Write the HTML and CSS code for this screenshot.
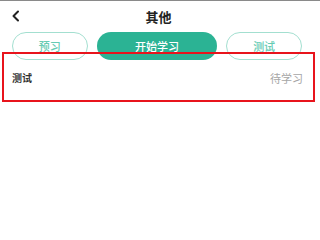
FILE: index.html
```html
<!DOCTYPE html>
<html>
<head>
<meta charset="utf-8">
<link rel="stylesheet" href="styles.css">
</head>
<body>
<div class="page">
  <div class="header">
    <svg class="back" width="8" height="12" viewBox="0 0 8 12"><path d="M6 1.5 L1.5 6 L6 10.5" fill="none" stroke="#222" stroke-width="2" stroke-linecap="round" stroke-linejoin="round"/></svg>
    <div class="title">其他</div>
  </div>
  <div class="tabs">
    <div class="pill outline">预习</div>
    <div class="pill filled">开始学习</div>
    <div class="pill outline">测试</div>
  </div>
  <div class="row">
    <span class="name">测试</span>
    <span class="status">待学习</span>
  </div>
  <div class="mark"></div>
</div>
</body>
</html>
```
FILE: styles.css
```css
html, body {
  margin: 0;
  padding: 0;
  background: #fff;
}
.page {
  position: relative;
  width: 320px;
  height: 219px;
  border-top: 1.5px solid #8a8a8a;
  box-sizing: border-box;
  font-family: "Noto Sans CJK SC", "Noto Sans", sans-serif;
}
.header {
  position: relative;
  height: 30.5px;
  display: flex;
  align-items: center;
  justify-content: center;
}
.back {
  position: absolute;
  left: 12px;
  top: 9px;
}
.title {
  font-size: 13px;
  font-weight: 700;
  color: #222;
  margin-left: -3px;
}
.tabs {
  display: flex;
  gap: 9px;
  padding: 0 18px 0 12px;
  height: 28px;
}
.pill {
  height: 28px;
  box-sizing: border-box;
  border-radius: 14px;
  display: flex;
  align-items: center;
  justify-content: center;
  font-size: 11px;
  font-weight: 500;
}
.outline {
  width: 76px;
  border: 1.5px solid #a3dfd0;
  color: #66cbb3;
}
.filled {
  width: 121px;
  background: #2bb394;
  color: #fff;
}
.row {
  display: flex;
  justify-content: space-between;
  align-items: center;
  height: 36px;
  padding: 0 17px 0 12px;
}
.name {
  font-size: 10px;
  font-weight: 700;
  color: #333;
}
.status {
  font-size: 11px;
  color: #a6a6a6;
}
.mark {
  position: absolute;
  left: 2px;
  top: 51px;
  width: 313px;
  height: 50px;
  box-sizing: border-box;
  border: 2px solid #e8141c;
}
```
